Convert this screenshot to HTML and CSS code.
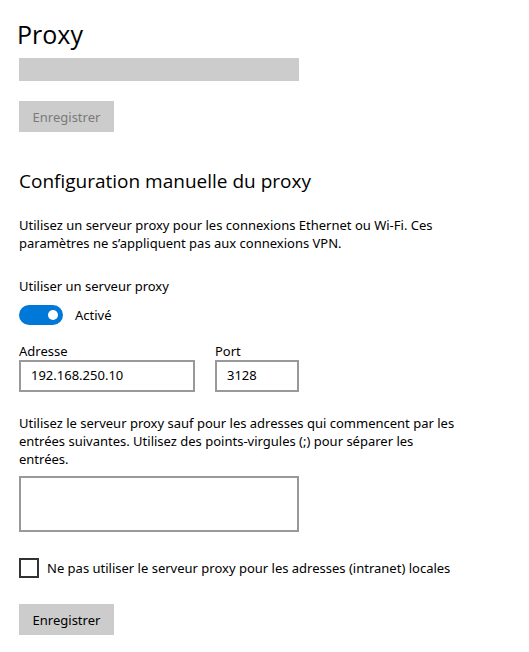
FILE: index.html
```html
<!DOCTYPE html>
<html lang="fr">
<head>
<meta charset="utf-8">
<meta name="viewport" content="width=device-width, initial-scale=1">
<title>Proxy</title>
<link rel="stylesheet" href="styles.css">
</head>
<body>
<main class="page">
  <h1 class="title">Proxy</h1>
  <form class="script-setup">
    <input class="script-address" type="text" aria-label="Adresse du script" disabled>
    <button class="button" type="button" disabled>Enregistrer</button>
  </form>
  <form class="manual-setup">
    <h2 class="heading">Configuration manuelle du proxy</h2>
    <p class="text">Utilisez un serveur proxy pour les connexions Ethernet ou Wi-Fi. Ces paramètres ne s’appliquent pas aux connexions VPN.</p>
    <label class="label" for="use-proxy">Utiliser un serveur proxy</label>
    <div class="switch-row">
      <input class="switch" id="use-proxy" type="checkbox" role="switch" checked>
      <span>Activé</span>
    </div>
    <div class="fields">
      <div class="field field-address">
        <label for="address">Adresse</label>
        <input class="input" id="address" type="text" value="192.168.250.10">
      </div>
      <div class="field field-port">
        <label for="port">Port</label>
        <input class="input" id="port" type="text" value="3128">
      </div>
    </div>
    <label class="text exceptions-label" for="exceptions">Utilisez le serveur proxy sauf pour les adresses qui commencent par les entrées suivantes. Utilisez des points-virgules (;) pour séparer les entrées.</label>
    <textarea class="input exceptions" id="exceptions"></textarea>
    <label class="check-row"><input class="check" type="checkbox"><span>Ne pas utiliser le serveur proxy pour les adresses (intranet) locales</span></label>
    <button class="button" type="button">Enregistrer</button>
  </form>
</main>
</body>
</html>
```

FILE: styles.css
```css
* {
  box-sizing: border-box;
}

body {
  margin: 0;
  background: #fff;
  color: #000;
  font: 13px/18px "Noto Sans", "Open Sans", sans-serif;
}

input,
button,
textarea {
  display: block;
  margin: 0;
  border-radius: 0;
  font: inherit;
  color: inherit;
}

.page {
  max-width: 480px;
  padding: 16px 19px;
}

.title {
  margin: 0 0 6px -2px;
  font-family: "Open Sans", "Noto Sans", sans-serif;
  font-size: 25px;
  line-height: 36px;
  font-weight: 400;
}

.script-address {
  width: 100%;
  max-width: 280px;
  height: 23px;
  margin-bottom: 20px;
  border: 0;
  background: #ccc;
}

.button {
  min-width: 95px;
  height: 31px;
  padding: 0 12px;
  border: 0;
  background: #ccc;
}

.button:disabled {
  color: #7a7a7a;
}

.manual-setup {
  padding-top: 36px;
}

.heading {
  margin: 0 0 22px;
  font-family: "Open Sans", "Noto Sans", sans-serif;
  font-size: 19px;
  line-height: 26px;
  font-weight: 400;
}

.text {
  display: block;
  margin: 0;
}

.label {
  display: block;
  margin-top: 25px;
}

.switch-row {
  display: flex;
  align-items: center;
  gap: 12px;
  height: 20px;
  margin-top: 10px;
}

.switch {
  appearance: none;
  width: 44px;
  height: 20px;
  padding: 5px;
  border-radius: 10px;
  background: #0078d7;
}

.switch::before {
  content: "";
  display: block;
  width: 10px;
  height: 10px;
  margin-left: auto;
  border-radius: 50%;
  background: #fff;
}

.switch:not(:checked) {
  background: #999;
}

.switch:not(:checked)::before {
  margin-left: 0;
}

.fields {
  display: flex;
  gap: 20px;
  margin-top: 17px;
}

.field {
  min-width: 0;
}

.field-address {
  flex: 0 1 176px;
}

.field-port {
  flex: 0 1 84px;
}

.field label {
  display: block;
}

.input {
  width: 100%;
  height: 32px;
  padding: 0 10px 2px;
  border: 2px solid #999;
  outline: 0;
  background: #fff;
}

.exceptions-label {
  margin-top: 22px;
}

.exceptions {
  max-width: 280px;
  height: 56px;
  margin-top: 8px;
  padding: 6px 10px;
  resize: none;
}

.check-row {
  display: flex;
  align-items: center;
  gap: 8px;
  margin: 26px 0;
}

.check {
  appearance: none;
  flex: none;
  width: 20px;
  height: 20px;
  border: 2px solid #333;
}

.check:checked {
  background: #0078d7;
}
```
